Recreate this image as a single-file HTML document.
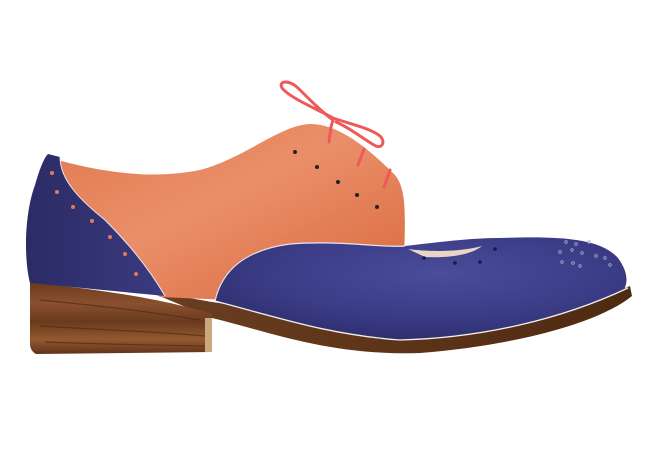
<!DOCTYPE html>
<html><head><meta charset="utf-8"><style>
html,body{margin:0;padding:0;background:#fff;width:660px;height:460px;overflow:hidden}
svg{display:block}
</style></head><body>
<svg width="660" height="460" viewBox="0 0 660 460" xmlns="http://www.w3.org/2000/svg">
<defs>
<linearGradient id="wood" x1="0" y1="0" x2="0" y2="1">
<stop offset="0" stop-color="#6b3a1c"/><stop offset="0.3" stop-color="#8a5030"/><stop offset="0.55" stop-color="#6a3a1d"/><stop offset="0.8" stop-color="#93592f"/><stop offset="1" stop-color="#5e3218"/>
</linearGradient>
<linearGradient id="sole" x1="0" y1="0" x2="1" y2="0">
<stop offset="0" stop-color="#6b3e20"/><stop offset="1" stop-color="#4e2a12"/>
</linearGradient>
<linearGradient id="org" x1="0" y1="0" x2="1" y2="1">
<stop offset="0" stop-color="#e0784d"/><stop offset="0.45" stop-color="#ea8f6a"/><stop offset="1" stop-color="#d9683c"/>
</linearGradient>
<radialGradient id="blu" cx="0.55" cy="0.35" r="0.7">
<stop offset="0" stop-color="#4b4c9a"/><stop offset="0.6" stop-color="#3b3c86"/><stop offset="1" stop-color="#2c2c6a"/>
</radialGradient>
<linearGradient id="cnt" x1="0" y1="0" x2="1" y2="0">
<stop offset="0" stop-color="#2b2b66"/><stop offset="1" stop-color="#3a3a80"/>
</linearGradient>
</defs>
<!-- sole -->
<path d="M150 292 C180 296 200 300 212 302 C260 308 310 324 400 340 C480 336 560 318 630 286 L632 296 C600 322 520 345 420 353 C330 356 270 332 212 318 Z" fill="url(#sole)"/>
<!-- heel -->
<path d="M30 282 C100 290 160 298 212 314 L212 352 L36 354 C32 352 30 348 30 344 Z" fill="url(#wood)"/>
<path d="M40 300 C90 305 140 310 200 320 M40 326 C100 330 150 331 205 336 M45 342 C90 344 150 345 205 346" stroke="#4a2410" stroke-width="1.2" fill="none" opacity="0.6"/>
<rect x="205" y="318" width="7" height="34" fill="#c9a77f"/>
<!-- orange quarter -->
<path d="M50 158 C100 172 150 180 200 170 C245 158 280 125 310 124 C340 124 370 150 395 175 C405 188 406 205 404 258 L230 300 L160 297 L60 230 Z" fill="url(#org)"/>
<!-- heel counter -->
<path d="M48 154 L60 157 C60 180 80 200 105 220 C130 245 150 270 165 296 L30 283 C24 260 24 215 35 185 C40 168 44 158 48 154 Z" fill="url(#cnt)"/>
<path d="M60 157 C60 180 80 200 105 220 C130 245 150 270 165 296" stroke="#e8e6f2" stroke-width="1" fill="none"/>
<g fill="#e57a52">
<circle cx="52" cy="173" r="2"/><circle cx="57" cy="192" r="2"/><circle cx="73" cy="207" r="2"/><circle cx="92" cy="221" r="2"/><circle cx="110" cy="237" r="2"/><circle cx="125" cy="254" r="2"/><circle cx="136" cy="274" r="2"/>
</g>
<!-- vamp -->
<path d="M215 301 C222 270 245 250 290 244 C340 240 380 248 405 246 C440 242 470 238 500 238 C560 236 600 238 618 258 C628 272 628 282 624 290 C560 320 480 338 400 340 C330 335 280 318 215 301 Z" fill="url(#blu)"/>
<path d="M215 301 C222 270 245 250 290 244 C340 240 380 248 405 246" stroke="#e8e6f2" stroke-width="1.2" fill="none"/>
<path d="M215 301 C280 318 330 335 400 340 C480 338 560 320 628 288" stroke="#f2eee8" stroke-width="1.3" fill="none"/>
<path d="M408 249 C430 252 460 252 482 246 C470 256 445 258 425 257 Z" fill="#e9d6c8"/>
<g fill="#1a1a3a"><circle cx="424" cy="258" r="1.8"/><circle cx="455" cy="263" r="1.8"/><circle cx="480" cy="262" r="1.8"/><circle cx="495" cy="249" r="1.8"/></g>
<g fill="none" stroke="#a9a9c4" stroke-width="0.8">
<circle cx="566" cy="242" r="1.3"/><circle cx="576" cy="244" r="1.3"/><circle cx="589" cy="242" r="1.3"/><circle cx="560" cy="252" r="1.3"/><circle cx="572" cy="250" r="1.3"/><circle cx="582" cy="253" r="1.3"/><circle cx="562" cy="262" r="1.3"/><circle cx="573" cy="263" r="1.3"/><circle cx="580" cy="266" r="1.3"/><circle cx="596" cy="256" r="1.3"/><circle cx="605" cy="258" r="1.3"/><circle cx="610" cy="265" r="1.3"/>
</g>
<!-- eyelets -->
<g fill="#222"><circle cx="295" cy="152" r="2"/><circle cx="317" cy="167" r="2"/><circle cx="338" cy="182" r="2"/><circle cx="357" cy="195" r="2"/><circle cx="377" cy="207" r="2"/></g>
<!-- laces -->
<g stroke="#ee5a5a" stroke-width="3" fill="none" stroke-linecap="round">
<path d="M331 127 L329 142"/><path d="M364 149 L358 165"/><path d="M390 170 L384 187"/>
<path d="M333 118 C315 108 290 98 282 88 C278 80 290 80 298 88 C310 100 322 112 333 120"/>
<path d="M333 118 C350 124 370 128 380 136 C386 142 382 150 374 145 C362 138 350 128 336 122"/>
<path d="M333 120 L331 127"/>
</g>
</svg>
</body></html>
